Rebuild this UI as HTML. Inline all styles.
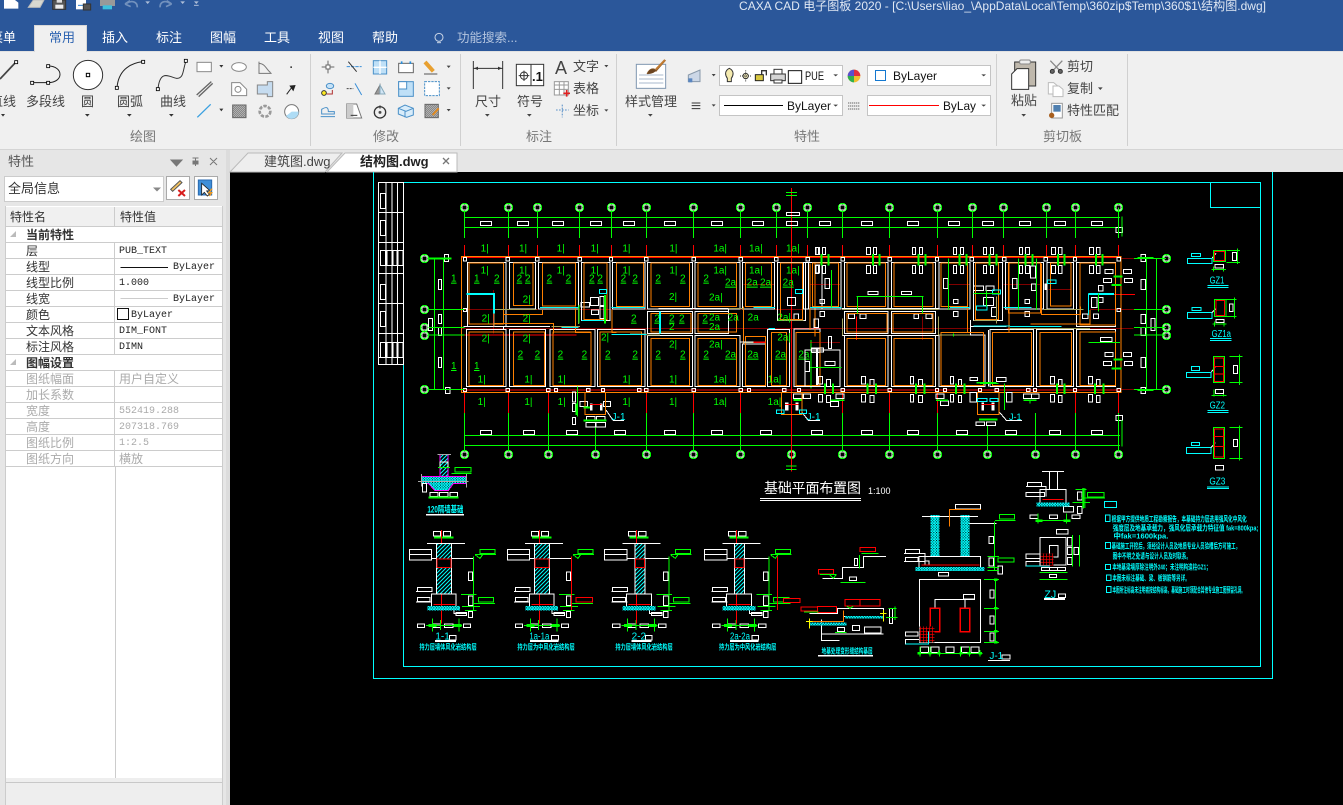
<!DOCTYPE html>
<html lang="zh"><head><meta charset="utf-8"><title>CAXA CAD</title>
<style>
html,body{margin:0;padding:0;width:1343px;height:805px;overflow:hidden;background:#000}
body{position:relative;font-family:"Liberation Sans","Noto Sans CJK SC",sans-serif}
.a{position:absolute}
.panel{left:0;top:150px;width:230px;height:655px;background:#e6e6e6}
.rw{position:absolute;left:6px;width:216px;height:16px;box-sizing:border-box;border-bottom:1px solid #ccc;font-size:12px;line-height:17px;color:#333;white-space:nowrap}
.rw i{position:absolute;left:108px;top:0;width:1px;height:16px;background:#ccc}
.rw b,.rw span{position:absolute;top:0}
.n{left:20px}.v{left:113px;font:10px/17px "Liberation Mono",monospace;color:#222}.g{color:#aaa}
.cj{font-family:"Liberation Sans","Noto Sans CJK SC",sans-serif;font-size:12px}
svg text{font-family:"Liberation Sans","Noto Sans CJK SC",sans-serif}
</style></head><body>
<div class="a" style="left:0;top:0;width:1343px;height:51px;background:#2b579a"></div>
<div class="a" style="left:0;top:51px;width:1343px;height:98px;background:#f0f0f0;border-top:1px solid #e2e2e2;box-sizing:border-box"></div>
<div class="a" style="left:0;top:149px;width:1343px;height:23px;background:#e6e6e6;border-top:1px solid #d4d4d4;box-sizing:border-box"></div>
<div class="a" style="left:34px;top:25px;width:53px;height:27px;background:#f0f0f0;border:1px solid #d8d8d8;border-bottom:0;box-sizing:border-box"></div>
<div class="a" style="left:230px;top:172px;width:1113px;height:633px;background:#000"></div>

<div class="a panel">
 <div class="a" style="left:4px;top:26px;width:160px;height:26px;background:#fff;border:1px solid #ccc;box-sizing:border-box;font-size:13px;line-height:23px;color:#333;padding-left:3px">全局信息</div>
 <div class="a" style="left:166px;top:26px;width:24px;height:24px;background:#fff;border:1px solid #aaa;box-sizing:border-box"></div>
 <div class="a" style="left:194px;top:26px;width:24px;height:24px;background:#fff;border:1px solid #aaa;box-sizing:border-box"></div>
 <div class="a" style="left:5px;top:56px;width:218px;height:599px;background:#fff;border:1px solid #ccc;border-width:0 1px;box-sizing:border-box"></div>
 <div class="a" style="left:115px;top:316px;width:1px;height:312px;background:#ccc"></div>
 <div class="a" style="left:6px;top:628px;width:216px;height:27px;background:#eee"></div>
 <div class="a" style="left:6px;top:632px;width:216px;height:1px;background:#c8c8c8"></div>
 <div class="a" style="left:226px;top:0;width:4px;height:655px;background:#dcdcdc"></div>
 <div class="rw" style="top:57px;height:20px;background:#f0f0f0;line-height:21px;border-bottom:1px solid #ccc"><span style="left:4px">特性名</span><i style="height:20px"></i><span style="left:114px">特性值</span></div>
 <div class="rw" style="top:77px"><b class="n" style="font-weight:700">当前特性</b></div>
 <div class="rw" style="top:93px"><span class="n">层</span><i></i><span class="v">PUB_TEXT</span></div>
 <div class="rw" style="top:109px"><span class="n">线型</span><i></i><span class="v" style="left:167px">ByLayer</span></div>
 <div class="rw" style="top:125px"><span class="n">线型比例</span><i></i><span class="v">1.000</span></div>
 <div class="rw" style="top:141px"><span class="n">线宽</span><i></i><span class="v" style="left:167px">ByLayer</span></div>
 <div class="rw" style="top:157px"><span class="n">颜色</span><i></i><span class="v" style="left:125px">ByLayer</span></div>
 <div class="rw" style="top:173px"><span class="n">文本风格</span><i></i><span class="v">DIM_FONT</span></div>
 <div class="rw" style="top:189px"><span class="n">标注风格</span><i></i><span class="v">DIMN</span></div>
 <div class="rw" style="top:205px"><b class="n" style="font-weight:700">图幅设置</b></div>
 <div class="rw" style="top:221px"><span class="n g">图纸幅面</span><i></i><span class="v cj g">用户自定义</span></div>
 <div class="rw" style="top:237px"><span class="n g">加长系数</span><i></i></div>
 <div class="rw" style="top:253px"><span class="n g">宽度</span><i></i><span class="v g">552419.288</span></div>
 <div class="rw" style="top:269px"><span class="n g">高度</span><i></i><span class="v g">207318.769</span></div>
 <div class="rw" style="top:285px"><span class="n g">图纸比例</span><i></i><span class="v g">1:2.5</span></div>
 <div class="rw" style="top:301px"><span class="n g">图纸方向</span><i></i><span class="v cj g">横放</span></div>
</div>

<svg class="a" style="left:0;top:0" width="1343" height="805" viewBox="0 0 1343 805" xmlns="http://www.w3.org/2000/svg">
<defs>
<pattern id="hz" width="12" height="12" patternUnits="userSpaceOnUse"><rect width="12" height="12" fill="#000"/><path d="M0 12L12 0M-3 3L3 -3M9 15L15 9" stroke="#0ff" stroke-width="3"/></pattern>
<pattern id="sp" width="8" height="8" patternUnits="userSpaceOnUse"><rect width="8" height="8" fill="#0ff"/><rect width="3" height="3" fill="#000"/><rect x="5" y="4" width="2" height="3" fill="#000"/></pattern>
<pattern id="rh" width="9" height="9" patternUnits="userSpaceOnUse"><rect width="9" height="9" fill="#000"/><path d="M0 0H9M0 0V9" stroke="#f00" stroke-width="4"/></pattern>
<pattern id="gh" width="6" height="6" patternUnits="userSpaceOnUse"><rect width="6" height="6" fill="#b8b8b8"/><path d="M0 6L6 0" stroke="#777" stroke-width="2"/></pattern>
<g id="c"><circle r="4" fill="#000" stroke="#0f0" stroke-width="1.3"/><rect x="-2.500" y="-2.500" width="5" height="5" fill="none" stroke="#fff"/></g>
<g id="sec">
 <g stroke="#fff" stroke-width="3" fill="none">
  <path d="M-32 244h22v14h-22zM-2 244h22v14h-22zM-51 280H63M-104 298h67v16h-67zM-104 314h67v16h-67zM-36 325H90M-38 432h74v38h-74zM-80 412h44v12h-44zM-84 424H-36M-80 442h38v12h-38zM-84 456H-36M73 366h13v26h-13zM73 438h14v28h-14zM73 484h13v18h-13zM30 470V490H68M36 487h32v10h-32zM-80 522h22v10h-22zM-35 522h25v10h-25zM2 522h25v10h-25zM58 522h22v10h-22z"/>
 </g>
 <path d="M-30 262H28" stroke="#0f0" stroke-width="6"/>
 <path d="M108 298h45v12h-45zM93 314H156M93 314L108 325L116 314M89 320V480M51 433H98M54 470H108M63 482H98M103 442h46v14h-46zM90 460H153M-54 526H54M-35 505V545M-10 510V540M45 505V545" stroke="#0f0" stroke-width="3" fill="none"/>
 <rect x="-46" y="522" width="24" height="9" fill="#0f0"/><rect x="28" y="522" width="24" height="9" fill="#0f0"/>
 <path d="M-8 240V520M-32 463H33" stroke="#f00" stroke-width="3"/>
 <rect x="-50" y="468" width="98" height="14" fill="url(#sp)"/>
</g>
</defs>

<!-- title bar text -->
<text x="739" y="10" font-size="12" fill="#dfe7f3" textLength="527" lengthAdjust="spacingAndGlyphs">CAXA CAD 电子图板 2020 - [C:\Users\liao_\AppData\Local\Temp\360zip$Temp\360$1\结构图.dwg]</text>
<g font-size="13" fill="#fff">
<text x="-10" y="42">菜单</text><text x="49" y="42" fill="#2b62b0">常用</text><text x="102" y="42">插入</text><text x="156" y="42">标注</text><text x="210" y="42">图幅</text><text x="264" y="42">工具</text><text x="318" y="42">视图</text><text x="372" y="42">帮助</text>
<text x="457" y="42" fill="#b4c5df" font-size="12.500">功能搜索...</text>
</g>
<!-- ribbon labels -->
<g font-size="13" fill="#444">
<text x="-10" y="106">直线</text><text x="26" y="106">多段线</text><text x="81" y="106">圆</text><text x="117" y="106">圆弧</text><text x="160" y="106">曲线</text>
<text x="475" y="106">尺寸</text><text x="517" y="106">符号</text><text x="573" y="71">文字</text><text x="573" y="93">表格</text><text x="573" y="115">坐标</text>
<text x="625" y="106">样式管理</text><text x="1011" y="105">粘贴</text><text x="1067" y="71">剪切</text><text x="1067" y="93">复制</text><text x="1067" y="115">特性匹配</text>
</g>
<g font-size="13" fill="#777">
<text x="130" y="141">绘图</text><text x="373" y="141">修改</text><text x="526" y="141">标注</text><text x="794" y="141">特性</text><text x="1043" y="141">剪切板</text>
</g>
<path d="M310.500 54V146M460.500 54V146M616.500 54V146M996.500 54V146M1127.500 54V146" stroke="#d0d0d0"/>

<!-- properties combos -->
<g fill="#fff" stroke="#c4c4c4">
<rect x="719.500" y="65.500" width="123" height="20"/><rect x="719.500" y="95.500" width="123" height="20"/><rect x="867.500" y="65.500" width="123" height="20"/><rect x="867.500" y="95.500" width="123" height="20"/>
</g>
<g font-size="12" fill="#111"><text x="805" y="80" textLength="19" lengthAdjust="spacingAndGlyphs">PUE</text><text x="787" y="110">ByLayer</text><text x="893" y="80">ByLayer</text><text x="943" y="110" textLength="33" lengthAdjust="spacingAndGlyphs">ByLay</text></g>
<path d="M724 105.500H783" stroke="#000"/><path d="M869 105.500H939" stroke="#f00"/>
<rect x="875.500" y="70.500" width="10" height="10" fill="#fff" stroke="#1478d0"/>

<!-- zoom-1 scale ribbon icons -->
<g transform="scale(.33333)" fill="none" stroke="#555" stroke-width="3">
 <g fill="#fff" stroke="none"><path d="M12 0H45L55 8V26H12z"/></g>
 <path d="M85 22L100 0H132L120 22z" fill="#d8d8d0" stroke="#bbb"/>
 <path d="M158 0H197V28H158z" fill="#555" stroke="#333"/><rect x="170" y="0" width="16" height="8" fill="#ddd" stroke="none"/><rect x="166" y="14" width="24" height="12" fill="#eee" stroke="none"/>
 <rect x="228" y="0" width="30" height="28" fill="#fff" stroke="none"/><path d="M234 16h16" stroke="#2b7fd0"/><rect x="250" y="12" width="22" height="18" fill="#555" stroke="#333"/>
 <rect x="300" y="0" width="45" height="18" fill="#999" stroke="none"/><rect x="308" y="16" width="28" height="12" fill="#3fc0dc" stroke="none"/>
 <path d="M380 10C395 0 412 5 412 22M375 12L390 2M375 12L392 20" stroke="#7291bd" stroke-width="5"/>
 <path d="M510 10C495 0 480 5 480 22M515 12L500 2M515 12L498 20" stroke="#7291bd" stroke-width="5"/>
 <path d="M436 4h14l-7 8zM541 4h14l-7 8zM582 4h14l-7 8z" fill="#aebed8" stroke="none"/><path d="M582 16h14" stroke="#aebed8"/>
 <!-- bulb -->
 <circle cx="1317" cy="112" r="12" stroke="#c8d4e6"/><path d="M1311 128h12" stroke="#c8d4e6"/>
 <!-- draw group -->
 <path d="M0 237L48 186" stroke="#444" stroke-width="5"/><rect x="44" y="182" width="9" height="9" fill="#fff" stroke="#000" stroke-width="2.500"/>
 <path d="M96 248H144M144 198C192 198 192 248 144 248" stroke="#222" stroke-width="3"/>
 <g fill="#fff" stroke="#000" stroke-width="2.500"><rect x="140" y="194" width="9" height="9"/><rect x="92" y="244" width="9" height="9"/><rect x="140" y="244" width="9" height="9"/></g>
 <circle cx="264" cy="225" r="44" fill="#fff" stroke="#333"/><rect x="259" y="220" width="10" height="10" stroke="#000"/>
 <path d="M351 263C355 215 385 190 429 185" stroke="#222"/><path d="M474 267C480 205 510 232 530 235C552 236 548 210 558 183" stroke="#333"/>
 <g fill="#fff" stroke="#000" stroke-width="2.500"><rect x="346" y="259" width="9" height="9"/><rect x="425" y="181" width="9" height="9"/><rect x="469" y="263" width="9" height="9"/><rect x="553" y="178" width="9" height="9"/></g>
 <path d="M3 342h12l-6 8zM255 342h14l-7 8zM381 342h14l-7 8zM507 342h14l-7 8zM658 195h12l-6 8zM658 326h12l-6 8z" fill="#333" stroke="none"/>
 <rect x="591" y="187" width="43" height="28" fill="#fff" stroke="#888"/>
 <path d="M590 285L634 245M596 290L638 250" stroke="#666" stroke-width="4"/>
 <path d="M592 352L632 313" stroke="#3aa0e0" stroke-width="4"/>
 <ellipse cx="717" cy="201" rx="22" ry="13" fill="#fff" stroke="#888"/>
 <path d="M695 248H720L740 268V287H695z" fill="#fff" stroke="#888"/><circle cx="714" cy="268" r="9" stroke="#888"/>
 <rect x="698" y="315" width="40" height="38" fill="url(#gh)" stroke="#666"/>
 <path d="M777 185V220H815M777 190C795 190 800 210 812 218" stroke="#777"/>
 <path d="M772 255h30v-10h16v45h-16v-8h-30z" fill="#c6dcf0" stroke="#888"/>
 <circle cx="795" cy="334" r="16" stroke="#9a9a9a" stroke-width="8" stroke-dasharray="10 4"/>
 <rect x="871" y="199" width="5" height="5" fill="#444" stroke="none"/>
 <path d="M860 283L874 264" stroke="#222"/><path d="M868 257L887 255L880 274z" fill="#222" stroke="none"/>
 <circle cx="875" cy="335" r="21" fill="#fff" stroke="#777"/><path d="M875 335H896A21 21 0 0 1 858 348z" fill="#aedcf5" stroke="none"/>
 <!-- modify group -->
 <path d="M965 201H1003M984 182V220" stroke="#666"/><rect x="978" y="195" width="12" height="12" fill="#fff" stroke="#666"/>
 <path d="M1040 200H1085" stroke="#3a8fd8" stroke-dasharray="10 3"/><path d="M1045 185L1070 215" stroke="#333"/>
 <rect x="1120" y="182" width="40" height="40" fill="#bfe0f7" stroke="#4a90c8"/><path d="M1140 182V222M1120 202H1160" stroke="#fff" stroke-width="4"/>
 <rect x="1196" y="190" width="44" height="28" fill="#fff" stroke="#666"/><path d="M1205 184v8M1231 184v8" stroke="#2b8fdc" stroke-width="5"/>
 <path d="M1275 186L1300 214" stroke="#e8a030" stroke-width="12"/><path d="M1272 222H1312" stroke="#555"/>
 <path d="M1340 197h12l-6 7zM1340 262h12l-6 7zM1340 327h12l-6 7z" fill="#444" stroke="none"/>
 <circle cx="972" cy="279" r="7" fill="#fdea20" stroke="#333"/><ellipse cx="990" cy="258" rx="11" ry="8" fill="#c5e2f7" stroke="#4a90c8"/><path d="M980 282H997V270" stroke="#b03030"/>
 <path d="M1040 266H1060" stroke="#444" stroke-dasharray="6 3"/><path d="M1065 250L1085 285" stroke="#3a8fd8"/>
 <path d="M1125 282L1140 255V282z" fill="#999" stroke="#777"/><path d="M1155 282L1140 255V282z" fill="#d2e6f6" stroke="#8ab"/>
 <rect x="1196" y="245" width="44" height="44" fill="#bfe0f7" stroke="#4a90c8"/><rect x="1196" y="245" width="24" height="22" fill="#fff" stroke="#4a90c8"/>
 <rect x="1274" y="245" width="44" height="42" fill="#fff" stroke="#4a90c8" stroke-dasharray="7 3"/>
 <path d="M962 350H1005M965 342V328C978 320 985 320 985 335H1003V342z" stroke="#4a90c8"/>
 <path d="M1040 312H1070L1085 354H1040z" fill="#fff" stroke="#777"/><path d="M1040 312h20v42h-20z" fill="#ccc" stroke="none"/><path d="M1052 346h20" stroke="#333"/>
 <circle cx="1140" cy="337" r="17" stroke="#333" stroke-width="4"/><circle cx="1140" cy="337" r="3" fill="#333"/><path d="M1140 316V326" stroke="#333"/>
 <path d="M1195 325L1215 315L1240 325V345L1220 352L1195 342z" fill="#d8ecfa" stroke="#4a90c8"/><path d="M1215 332V352M1195 325L1218 334L1240 325" stroke="#4a90c8"/>
 <rect x="1275" y="313" width="40" height="40" fill="url(#gh)" stroke="#666"/><path d="M1298 345L1316 325" stroke="#e08a20" stroke-width="6"/>
</g>
<!-- zoom-2 group -->
<g transform="translate(450,0) scale(.33333)" fill="none" stroke="#333" stroke-width="3">
 <path d="M70 183V267M158 183V267M70 205H158"/><path d="M72 205l12-5v10zM156 205l-12-5v10z" fill="#333" stroke="none"/>
 <rect x="199" y="193" width="82" height="64" fill="#fff"/><path d="M243 193V257M222 212V243M206 227H238"/><circle cx="222" cy="227" r="11"/>
 <path d="M105 342h14l-7 8zM231 342h14l-7 8zM463 195h12l-6 7zM463 328h12l-6 7zM594 342h14l-7 8zM785 222h12l-6 7zM785 313h12l-6 7zM1150 223h14l-7 6zM1150 314h14l-7 6z" fill="#444" stroke="none"/>
 <rect x="313" y="245" width="42" height="40" fill="#fff" stroke="#999"/><path d="M313 255H355M313 268H355M328 245V285M342 245V285" stroke="#999"/><path d="M340 280H360M350 270V290" stroke="#e02020" stroke-width="5"/>
 <path d="M318 330H356M337 314V352" stroke="#7aa5d0" stroke-dasharray="5 4" stroke-width="4"/>
 <rect x="559" y="193" width="88" height="72" fill="#fff" stroke="#7f96b0"/><path d="M567 225H640M567 237H640M567 249H640" stroke="#a8b8cc"/><path d="M592 222C600 205 612 205 618 212L646 180L632 196" stroke="#8a5a2a" stroke-width="5"/><path d="M592 222C598 206 610 204 618 212C612 220 602 222 592 222z" fill="#6b4420" stroke="none"/><path d="M618 208L645 180" stroke="#c07a30" stroke-width="6"/>
 <path d="M715 225L750 210V245H715z" fill="#ccd7e6" stroke="#8899aa"/><rect x="715" y="235" width="12" height="12" fill="#5a86c0" stroke="none"/>
 <path d="M725 309H751M725 317H751M725 326H751"/>
 <path d="M838 205c-16 8-12 22-6 30v10h12v-10c6-8 10-22-6-30z" fill="#f5ebb0"/>
 <circle cx="887" cy="228" r="8" fill="#fdf5c0"/><path d="M870 228H904M887 211V245" stroke-dasharray="3 3"/>
 <rect x="916" y="224" width="24" height="18" fill="#d9c840" stroke="#222"/><path d="M935 224V212h14v14" stroke-width="4"/>
 <rect x="962" y="222" width="44" height="20" fill="#d5d5d5"/><rect x="972" y="208" width="24" height="14" fill="#fff"/><rect x="972" y="240" width="24" height="9" fill="#fff"/>
 <rect x="1015" y="212" width="40" height="38" fill="#fff" stroke="#111"/>
 <circle cx="1212" cy="228" r="19" fill="#f0c030" stroke="none"/><path d="M1212 228V209A19 19 0 0 0 1193 228z" fill="#5a50d0" stroke="none"/><path d="M1212 228H1193A19 19 0 0 0 1212 247z" fill="#30b050" stroke="none"/><path d="M1212 228V209A19 19 0 0 1 1231 228z" fill="#e03040" stroke="none"/>
 <path d="M1194 309H1230M1194 318H1230M1194 327H1230" stroke="#666" stroke-dasharray="4 2"/>
</g>
<text x="532" y="81" font-size="13" font-weight="700" fill="#111">.1</text>
<text x="555" y="74" font-size="18" fill="#444">A</text>
<!-- zoom-3 group -->
<g transform="translate(893,0) scale(.33333)" fill="none" stroke="#333" stroke-width="3">
 <rect x="365" y="186" width="63" height="72" fill="#bfb8ac"/><rect x="380" y="180" width="32" height="12" rx="4" fill="#eee" stroke="#888"/>
 <path d="M356 222L372 206H407V268H356z" fill="#fff"/>
 <path d="M385 342h14l-7 8zM615 262h14l-7 8zM265 223h14l-7 6zM265 314h14l-7 6z" fill="#444" stroke="none"/>
 <path d="M472 182L508 220M508 182L472 220" stroke="#888" stroke-width="4"/><circle cx="478" cy="214" r="6" fill="#666"/><circle cx="502" cy="214" r="6" fill="#666"/>
 <path d="M466 248H482L494 258V282H466z" fill="#fff" stroke="#bbb"/><path d="M480 258H498L510 268V290H480z" fill="#fff" stroke="#bbb"/>
 <rect x="476" y="310" width="32" height="44" fill="#fff" stroke="#999"/><rect x="481" y="315" width="22" height="20" fill="#5080b0" stroke="none"/><circle cx="476" cy="346" r="8" fill="#a86020" stroke="none"/>
</g>
<!-- panel header -->
<text x="8" y="166" font-size="13" fill="#555">特性</text>
<path d="M171 160h11l-5.500 6zM192.500 158h6M195.500 158v8M193 161h5v3h-5zM210 158l7 7M217 158l-7 7" stroke="#777" fill="#777"/>
<path d="M150 187.500h8l-4 4z" fill="#888" transform="translate(3,0)"/>
<g transform="translate(160,170) scale(.33333)">
 <path d="M32 58L60 32L66 38L38 64z" fill="#f0c060" stroke="#555" stroke-width="3"/><path d="M55 60L75 78M75 60L55 78" stroke="#d81e1e" stroke-width="6"/>
 <rect x="115" y="30" width="40" height="45" fill="#3f8fd8" stroke="#2a6ab0" stroke-width="3"/><path d="M125 40V75L133 67L142 78L148 73L140 63L150 62z" fill="#fff" stroke="#222" stroke-width="2.500"/><path d="M156 56L146 68H155L148 78" stroke="#f09a20" stroke-width="4" fill="none"/>
</g>
<path d="M10 237h6v-6zM10 365h6v-6z" fill="#bbb"/>
<path d="M120.500 267.500H168" stroke="#111"/><path d="M120.500 298.500H168" stroke="#ccc"/>
<rect x="117.500" y="308.500" width="11" height="11" fill="#fff" stroke="#111"/>
<!-- tabs -->
<path d="M230 172L248 153H342L325 172z" fill="#eeeeee" stroke="#bbb"/>
<path d="M327 172L345 153H457V172z" fill="#fff" stroke="#bbb"/>
<text x="264" y="166" font-size="13" fill="#444">建筑图.dwg</text>
<text x="360" y="166" font-size="13" font-weight="700" fill="#222">结构图.dwg</text>
<path d="M443 158l6 6M449 158l-6 6" stroke="#777" stroke-width="1.300"/>

<!-- =============== CAD DRAWING =============== -->
<g shape-rendering="crispEdges">
 <g fill="none" stroke="#0ff">
  <path d="M373.500 172V678.500H1272.500V172M403.500 182.500H1260.500V666.500H403.500z"/><path d="M1210.500 182V207.500H1260"/>
 </g>
 <!-- side title block -->
 <g fill="none" stroke="#fff"><path d="M378.500 182.500H403.500V364.500H378.500zM386 182V364M392 182V364M397.500 182V364M378 212.500H403M378 242.500H403M378 273.500H403M378 303.500H403M378 333.500H403M378 357.500H403"/>
 <path d="M380.500 193.500h5v15h-5zM380.500 220.500h5v15h-5zM380.500 250.500h5v15h-5zM387 250.500h5v15h-5zM393 250.500h4v15h-4zM398 250.500h5v15h-5zM380.500 284.500h5v15h-5zM380.500 311.500h5v15h-5zM380.500 342.500h5v15h-5zM387 342.500h5v15h-5zM393 342.500h4v15h-4zM398 342.500h5v15h-5z"/></g>
 <!-- dimension lines & axes -->
 <path d="M465 217.500H1120M465 227.500H1120M465 435.500H1120M465 445.500H1120" stroke="#0f0"/>
 <path d="M464.500 207V238M508.500 207V238M537.500 207V238M579.500 207V238M611.500 207V238M646.500 207V238M693.500 207V238M740.500 207V238M776.500 207V238M807.500 207V238M842.500 207V238M889.500 207V238M937.500 207V238M972.500 207V238M1003.500 207V238M1046.500 207V238M1075.500 207V238M1118.500 207V238" stroke="#0f0"/>
 <path d="M464.500 245V256M508.500 245V256M537.500 245V256M579.500 245V256M611.500 245V256M646.500 245V256M693.500 245V256M740.500 245V256M776.500 245V256M807.500 245V256M842.500 245V256M889.500 245V256M937.500 245V256M972.500 245V256M1003.500 245V256M1046.500 245V256M1075.500 245V256M1118.500 245V256M464.500 393V413M508.500 393V413M548.500 393V413M646.500 393V413M693.500 393V413M740.500 393V413M842.500 393V413M889.500 393V413M937.500 393V413M1075.500 393V413M1118.500 393V413M791.500 188V460" stroke="#f00"/>
 <path d="M464.500 413V454M508.500 413V454M548.500 413V454M595.500 425V454M646.500 413V454M693.500 413V454M740.500 413V454M842.500 413V454M889.500 413V454M937.500 413V454M987.500 425V454M1035.500 413V454M1075.500 413V454M1118.500 413V454" stroke="#0f0"/>
 <path d="M480.500 221.500h11v4h-11zM517.500 221.500h11v4h-11zM552.500 221.500h11v4h-11zM590.500 221.500h11v4h-11zM623.500 221.500h11v4h-11zM664.500 221.500h11v4h-11zM711.500 221.500h11v4h-11zM752.500 221.500h11v4h-11zM786.500 221.500h11v4h-11zM786.500 212.500h13v3h-13zM819.500 221.500h11v4h-11zM861.500 221.500h11v4h-11zM907.500 221.500h11v4h-11zM948.500 221.500h11v4h-11zM982.500 221.500h11v4h-11zM1019.500 221.500h11v4h-11zM1054.500 221.500h11v4h-11zM1091.500 221.500h11v4h-11zM480.500 430.500h11v4h-11zM523.500 430.500h11v4h-11zM566.500 430.500h11v4h-11zM614.500 430.500h11v4h-11zM664.500 430.500h11v4h-11zM711.500 430.500h11v4h-11zM760.500 430.500h11v4h-11zM811.500 430.500h11v4h-11zM861.500 430.500h11v4h-11zM907.500 430.500h11v4h-11zM956.500 430.500h11v4h-11zM1005.500 430.500h11v4h-11zM1049.500 430.500h11v4h-11zM1091.500 430.500h11v4h-11z" fill="none" stroke="#fff"/>
 <path d="M786 192.500H797M786 195.500H797" stroke="#0f0"/>
 <!-- axis circles -->
 <use href="#c" x="464.500" y="207.500"/><use href="#c" x="508.500" y="207.500"/><use href="#c" x="537.500" y="207.500"/><use href="#c" x="579.500" y="207.500"/><use href="#c" x="611.500" y="207.500"/><use href="#c" x="646.500" y="207.500"/><use href="#c" x="693.500" y="207.500"/><use href="#c" x="740.500" y="207.500"/><use href="#c" x="776.500" y="207.500"/><use href="#c" x="807.500" y="207.500"/><use href="#c" x="842.500" y="207.500"/><use href="#c" x="889.500" y="207.500"/><use href="#c" x="937.500" y="207.500"/><use href="#c" x="972.500" y="207.500"/><use href="#c" x="1003.500" y="207.500"/><use href="#c" x="1046.500" y="207.500"/><use href="#c" x="1075.500" y="207.500"/><use href="#c" x="1118.500" y="207.500"/>
 <use href="#c" x="464.500" y="454.500"/><use href="#c" x="508.500" y="454.500"/><use href="#c" x="548.500" y="454.500"/><use href="#c" x="595.500" y="454.500"/><use href="#c" x="646.500" y="454.500"/><use href="#c" x="693.500" y="454.500"/><use href="#c" x="740.500" y="454.500"/><use href="#c" x="791.500" y="454.500"/><use href="#c" x="842.500" y="454.500"/><use href="#c" x="889.500" y="454.500"/><use href="#c" x="937.500" y="454.500"/><use href="#c" x="987.500" y="454.500"/><use href="#c" x="1035.500" y="454.500"/><use href="#c" x="1075.500" y="454.500"/><use href="#c" x="1118.500" y="454.500"/>
 <use href="#c" x="424.500" y="258.500"/><use href="#c" x="424.500" y="309.500"/><use href="#c" x="424.500" y="327.500"/><use href="#c" x="424.500" y="335.500"/><use href="#c" x="424.500" y="389.500"/>
 <use href="#c" x="1166.500" y="258.500"/><use href="#c" x="1166.500" y="309.500"/><use href="#c" x="1166.500" y="327.500"/><use href="#c" x="1166.500" y="335.500"/><use href="#c" x="1166.500" y="389.500"/>

 <!-- left plan in zoom coordinates -->
 <g transform="translate(370,170) scale(.33333)" fill="none" stroke-width="3">
  <path d="M275 418H1350M275 475H1350M275 495H620M275 263H1350M275 660H1350M370 360V490M535 670V730M1120 343H1215M1192 475V650" stroke="#f00" stroke-width="2.500"/>
  <path d="M1350 260H275V667H1350" stroke="#ff8000"/>
  <g stroke="#fff">
   <rect x="292" y="277" width="116" height="193"/><rect x="418" y="277" width="79" height="140"/><rect x="506" y="277" width="119" height="140"/><rect x="635" y="277" width="85" height="175"/><rect x="728" y="277" width="97" height="140"/><rect x="833" y="277" width="135" height="140"/><rect x="975" y="277" width="135" height="140"/><rect x="1118" y="277" width="95" height="140"/><rect x="1222" y="277" width="85" height="175"/><rect x="1316" y="277" width="40" height="140"/>
   <rect x="290" y="479" width="118" height="170"/><rect x="418" y="479" width="109" height="170"/><rect x="540" y="479" width="135" height="170"/><rect x="683" y="479" width="142" height="170"/><rect x="833" y="497" width="135" height="152"/><rect x="975" y="497" width="135" height="152"/><rect x="1118" y="522" width="68" height="127"/><rect x="1192" y="479" width="66" height="170"/><rect x="1272" y="477" width="78" height="172"/>
   <rect x="833" y="425" width="135" height="65"/><rect x="975" y="425" width="100" height="65"/>
   <path d="M865 416H1075V425M280 470H540M400 470V479"/>
   <path d="M280 263h10v10h-10zM408 263h10v10h-10zM497 263h10v10h-10zM624 263h10v10h-10zM718 263h10v10h-10zM824 263h10v10h-10zM966 263h10v10h-10zM1107 263h10v10h-10zM1214 263h10v10h-10zM1308 263h10v10h-10zM280 655h10v10h-10zM408 655h10v10h-10zM530 655h10v10h-10zM553 655h10v10h-10zM650 655h10v10h-10zM694 655h10v10h-10zM803 655h10v10h-10zM824 655h10v10h-10zM966 655h10v10h-10zM1107 655h10v10h-10zM1132 655h10v10h-10zM1238 655h10v10h-10zM1282 655h10v10h-10zM280 415h10v10h-10z"/>
   <path d="M223 253h13v22h-13zM205 328h10v30h-10zM205 433h10v28h-10zM205 473h10v24h-10zM175 445h12v36h-12zM205 562h10v30h-10zM227 652h13v18h-13z"/>
   <rect x="662" y="382" width="24" height="24"/><rect x="633" y="397" width="26" height="14"/><rect x="690" y="380" width="12" height="26"/><rect x="690" y="410" width="12" height="36"/><rect x="664" y="420" width="22" height="14"/><rect x="1252" y="382" width="24" height="24"/><rect x="1272" y="432" width="14" height="16"/><rect x="1338" y="232" width="10" height="22"/><rect x="1338" y="285" width="10" height="24"/><rect x="1305" y="575" width="14" height="30"/><rect x="1325" y="535" width="25" height="12"/>
   <rect x="607" y="666" width="10" height="30"/><rect x="607" y="700" width="10" height="24"/><rect x="607" y="742" width="10" height="22"/><rect x="630" y="695" width="22" height="14"/><rect x="700" y="695" width="22" height="14"/><rect x="650" y="740" width="25" height="10"/><rect x="680" y="740" width="25" height="10"/><rect x="648" y="757" width="28" height="14"/><rect x="678" y="757" width="28" height="14"/><rect x="1270" y="672" width="28" height="14"/><rect x="1300" y="672" width="22" height="14"/>
   <path d="M708 720L730 752H762M1295 725L1315 752H1350"/>
  </g>
  <path d="M660 700h8v22h-8zM690 700h8v22h-8zM1245 698h10v24h-10zM1276 698h10v24h-10z" fill="#fff" stroke="none"/>
  <path d="M660 704H695M1245 704H1285" stroke="#f00"/>
  <g stroke="#ff8000">
   <rect x="297" y="279" width="104" height="183"/><rect x="430" y="279" width="59" height="128"/><rect x="517" y="279" width="100" height="129"/><rect x="642" y="279" width="69" height="170"/><rect x="740" y="279" width="80" height="130"/><rect x="843" y="279" width="115" height="131"/><rect x="984" y="279" width="116" height="131"/><rect x="1126" y="279" width="79" height="131"/><rect x="1231" y="279" width="67" height="170"/>
   <rect x="297" y="486" width="104" height="161"/><rect x="430" y="486" width="93" height="161"/><rect x="549" y="486" width="114" height="161"/><rect x="690" y="486" width="125" height="161"/><rect x="843" y="505" width="115" height="142"/><rect x="984" y="505" width="116" height="142"/><rect x="1126" y="500" width="60" height="147"/><rect x="1204" y="488" width="46" height="159"/><rect x="1278" y="488" width="72" height="159"/>
   <rect x="843" y="430" width="120" height="56"/><rect x="984" y="430" width="116" height="56"/>
   <path d="M400 418V433H518V420M372 461H551V490M617 412V487H662M726 420V488H740M1120 410V520M1335 280V500"/>
   <rect x="645" y="668" width="62" height="66"/><rect x="1234" y="668" width="62" height="66"/>
  </g>
  <g stroke="#a8a860"><path d="M372 420V470M372 418H500M545 470H630M635 452H700M625 410V462M1120 518H1150M1075 416H1120M830 495H870M1222 452H1300M780 492H830"/></g>
  <path d="M290 372H372V430" stroke="#0ff" stroke-width="5"/>
  <g stroke="#0ff"><path d="M510 412H625M725 412H825M635 452H700M725 493H830M1150 412H1215M1195 476H1215M575 472H625M1320 412H1350"/><rect x="688" y="358" width="22" height="13"/><rect x="1276" y="358" width="22" height="13"/><rect x="1220" y="720" width="22" height="10"/><rect x="1288" y="720" width="22" height="10"/></g>
  <path d="M870 425V490" stroke="#0ff" stroke-width="5"/>
  <path d="M1186 516H1110" stroke="#fff" stroke-width="4"/><path d="M1150 517H1186" stroke="#f00" stroke-width="4"/>
  <g stroke="#0f0">
   <path d="M193 265V658M220 265V658M175 418H283M175 473H283M175 495H283M175 658H283M627 405V460M1323 510V655M622 650V740M284 140V200"/>
   <path d="M175 265H245" stroke-width="6"/><path d="M705 375V460" stroke-width="6"/>
   <path d="M640 712H660M640 752H710M1270 690H1295M620 700V735" stroke-width="6"/>
  </g>
  <!-- labels -->
  <g fill="#0f0" stroke="none" font-size="30" shape-rendering="auto">
   <text x="332" y="245">1|</text><text x="447" y="245">1|</text><text x="560" y="245">1|</text><text x="662" y="245">1|</text><text x="757" y="245">1|</text><text x="898" y="245">1|</text><text x="1030" y="245">1a|</text><text x="1137" y="245">1a|</text><text x="1248" y="245">1a|</text>
   <text x="332" y="310">1|</text><text x="447" y="310">1|</text><text x="560" y="310">1|</text><text x="662" y="310">1|</text><text x="757" y="310">1|</text><text x="898" y="310">1|</text><text x="1030" y="310">1a|</text><text x="1137" y="310">1a|</text><text x="1248" y="310">1a|</text>
   <text x="335" y="455">2|</text><text x="458" y="397">2|</text><text x="458" y="455">2|</text><text x="897" y="390">2|</text><text x="1017" y="392">2a|</text>
   <text x="335" y="515">2|</text><text x="458" y="515">2|</text><text x="897" y="532">2|</text><text x="1017" y="532">2a|</text><text x="693" y="512">2|</text><text x="1222" y="512">2a|</text>
   <text x="323" y="637">1|</text><text x="463" y="637">1|</text><text x="563" y="637">1|</text><text x="757" y="637">1|</text><text x="897" y="637">1|</text><text x="1030" y="637">1a|</text><text x="1193" y="637">1a|</text>
   <text x="323" y="705">1|</text><text x="463" y="705">1|</text><text x="563" y="705">1|</text><text x="757" y="705">1|</text><text x="897" y="705">1|</text><text x="1030" y="705">1a|</text><text x="1193" y="705">1a|</text>
   <text x="1017" y="452">2a</text><text x="1017" y="480">2a</text><text x="1073" y="452">2a</text><text x="1222" y="452">2a|</text><text x="1133" y="452">2a</text><text x="897" y="480">2</text>
   <text x="725" y="750" fill="#0ff">J-1</text><text x="1310" y="750" fill="#0ff">J-1</text>
   <g text-decoration="underline">
    <text x="243" y="335">1</text><text x="243" y="597">1</text><text x="312" y="335">1</text><text x="372" y="335">2</text><text x="440" y="335">2</text><text x="465" y="335">2</text><text x="530" y="335">2</text><text x="587" y="335">2</text><text x="657" y="335">2</text><text x="682" y="335">2</text><text x="752" y="335">2</text><text x="787" y="335">2</text><text x="856" y="335">2</text><text x="930" y="335">2</text><text x="1000" y="335">2</text><text x="1065" y="347">2a</text><text x="1130" y="347">2a</text><text x="1170" y="347">2a</text><text x="1238" y="347">2a</text>
    <text x="443" y="563">2</text><text x="494" y="563">2</text><text x="563" y="563">2</text><text x="635" y="563">2</text><text x="705" y="563">2</text><text x="787" y="563">2</text><text x="856" y="563">2</text><text x="930" y="563">2</text><text x="1000" y="563">2</text><text x="1065" y="563">2a</text><text x="1132" y="563">2a</text><text x="1215" y="563">2a</text><text x="1285" y="563">2a</text><text x="312" y="597">1</text>
    <text x="853" y="455">2</text><text x="897" y="455">2</text><text x="927" y="455">2</text><text x="997" y="455">2</text><text x="783" y="455">2</text>
   </g>
  </g>
 </g>

 <!-- right plan in zoom coordinates -->
 <g transform="translate(810,170) scale(.33333)" fill="none" stroke-width="3">
  <path d="M0 263H933M0 660H933M0 343H90M415 343H480M580 343H690M715 358H785M0 475H480M0 418H95M590 475H970M935 265H972M935 658H972M0 517H90M380 418H480M590 418H700M840 418H972M140 440V510M337 440V510" stroke="#f00" stroke-width="2.500"/>
  <path d="M840 373H975" stroke="#f00" stroke-width="3"/>
  <path d="M0 260H933V667H0" stroke="#ff8000"/>
  <g stroke="#fff">
   <rect x="-20" y="277" width="113" height="140"/><rect x="103" y="277" width="131" height="140"/><rect x="244" y="277" width="133" height="140"/><rect x="387" y="277" width="93" height="140"/><rect x="490" y="277" width="88" height="175"/><rect x="587" y="277" width="113" height="140"/><rect x="711" y="277" width="79" height="140"/><rect x="800" y="277" width="116" height="193"/>
   <rect x="103" y="497" width="131" height="152"/><rect x="244" y="497" width="133" height="152"/><rect x="387" y="495" width="138" height="155"/><rect x="540" y="479" width="130" height="170"/><rect x="680" y="479" width="110" height="170"/><rect x="800" y="479" width="116" height="170"/><rect x="-15" y="540" width="105" height="110"/>
   <rect x="103" y="425" width="131" height="65"/><rect x="244" y="425" width="133" height="65"/>
   <path d="M96 415H385M96 497H385M482 450V495M482 470H590M535 480V650"/>
   <path d="M93 263h10v10h-10zM234 263h10v10h-10zM376 263h10v10h-10zM480 263h10v10h-10zM578 263h10v10h-10zM702 263h10v10h-10zM790 263h10v10h-10zM921 263h10v10h-10zM93 655h10v10h-10zM234 655h10v10h-10zM376 655h10v10h-10zM400 655h10v10h-10zM505 655h10v10h-10zM555 655h10v10h-10zM650 655h10v10h-10zM670 655h10v10h-10zM790 655h10v10h-10zM921 655h10v10h-10zM921 415h10v10h-10z"/>
   <path d="M16 232h10v22h-10zM37 232h10v22h-10zM170 232h12v22h-12zM190 232h10v22h-10zM307 232h10v22h-10zM328 232h10v22h-10zM430 232h10v22h-10zM451 232h10v22h-10zM520 232h10v22h-10zM541 232h10v22h-10zM628 232h10v22h-10zM647 232h12v22h-12zM725 232h12v22h-12zM746 232h10v22h-10zM838 232h12v22h-12zM860 232h10v22h-10zM16 286h10v24h-10zM37 286h10v24h-10zM170 286h12v24h-12zM190 286h10v24h-10zM307 286h10v24h-10zM328 286h10v24h-10zM430 286h10v24h-10zM451 286h10v24h-10zM520 286h10v24h-10zM541 286h10v24h-10zM628 286h10v24h-10zM647 286h12v24h-12zM725 286h12v24h-12zM746 286h10v24h-10zM838 286h12v24h-12zM860 286h10v24h-10z"/>
   <path d="M154 620h12v22h-12zM180 628h12v22h-12zM301 620h10v22h-10zM326 628h12v22h-12zM421 620h10v22h-10zM445 628h10v22h-10zM835 620h12v22h-12zM860 628h10v22h-10zM722 620h12v22h-12zM746 628h10v22h-10zM25 620h12v22h-12zM50 628h12v22h-12zM154 674h12v22h-12zM180 676h12v22h-12zM301 674h10v22h-10zM326 676h12v22h-12zM421 674h10v22h-10zM445 676h10v22h-10zM835 674h12v22h-12zM860 676h10v22h-10zM722 674h12v22h-12zM746 676h10v22h-10zM25 674h12v22h-12zM50 676h12v22h-12z"/>
   <path d="M45 325h14v30h-14zM400 325h14v30h-14zM607 325h14v30h-14zM662 288h14v36h-14zM664 342h14v20h-14zM845 382h16v30h-16zM865 347h14v16h-14zM865 382h14v16h-14zM885 298h24v12h-24zM940 298h24v12h-24zM880 325h24v12h-24zM943 325h24v12h-24zM545 412h14v28h-14zM520 382h30v24h-30zM490 348h30v14h-30zM528 348h24v14h-24zM30 388h14v12h-14zM30 425h14v14h-14zM430 388h14v12h-14zM430 425h14v14h-14zM645 388h14v12h-14zM645 425h14v14h-14zM115 432h18v14h-18zM150 432h18v14h-18zM312 432h14v14h-14zM348 432h18v14h-18zM818 432h16v14h-16zM850 432h16v14h-16zM12 447h14v26h-14zM55 500h10v36h-10zM5 534h36v12h-36zM45 574h30v12h-30zM174 364h30v10h-30zM274 364h30v10h-30zM885 547h24v12h-24zM940 547h24v12h-24zM880 574h24v12h-24zM943 574h24v12h-24zM872 503h34v12h-34zM480 622h22v10h-22zM560 622h28v12h-28zM498 756h26v11h-26zM530 756h26v11h-26zM640 672h24v14h-24zM665 672h22v14h-22zM78 672h24v14h-24zM62 695h24v14h-24zM378 672h24v14h-24zM392 693h24v14h-24zM590 668h16v28h-16zM480 668h20v28h-20zM918 172h20v16h-20zM918 736h20v16h-20z"/>
   <path d="M993 253h14v22h-14zM993 328h14v30h-14zM993 433h14v28h-14zM993 473h14v24h-14zM1023 445h12v36h-12zM993 562h14v30h-14zM993 652h14v18h-14zM567 725L590 752H636"/>
  </g>
  <path d="M703 340h10v20h-10zM18 535h6v110h-6zM514 697h8v24h-8zM545 697h8v24h-8z" fill="#fff" stroke="none"/>
  <path d="M514 704H553" stroke="#f00"/>
  <g stroke="#ff8000">
   <rect x="111" y="279" width="116" height="131"/><rect x="252" y="279" width="117" height="131"/><rect x="393" y="279" width="79" height="131"/><rect x="497" y="279" width="69" height="170"/><rect x="595" y="279" width="96" height="150"/><rect x="721" y="279" width="62" height="129"/><rect x="810" y="279" width="106" height="186"/><rect x="7" y="279" width="78" height="131"/>
   <rect x="111" y="505" width="116" height="142"/><rect x="252" y="505" width="117" height="142"/><rect x="393" y="488" width="127" height="159"/><rect x="547" y="488" width="117" height="159"/><rect x="690" y="488" width="94" height="159"/><rect x="810" y="486" width="106" height="161"/>
   <rect x="111" y="430" width="120" height="56"/><rect x="249" y="430" width="120" height="56"/>
   <path d="M473 280V488H522M597 280V488H547M662 462H840V420M695 280V433H812V410M503 668V734H567V668M0 280V480"/>
  </g>
  <g stroke="#a8a860"><path d="M97 445V497M385 440V495M385 495H480M96 418H385M490 452H560M560 380V460M600 475H840M700 418H820"/></g>
  <g stroke="#0ff"><path d="M0 412H95M420 412H480M580 412H665M490 468H600M600 470H755M835 370V435"/><rect x="499" y="408" width="32" height="12"/><rect x="548" y="360" width="24" height="12"/><rect x="712" y="330" width="26" height="10"/><rect x="503" y="685" width="28" height="10"/><rect x="540" y="685" width="24" height="10"/></g>
  <path d="M835 372H912" stroke="#0ff" stroke-width="5"/>
  <g stroke="#0f0">
   <path d="M140 380H340M142 380V430M337 380V430M415 265V420M625 265V420M680 265V420M865 370V425M835 517H930M0 592H95M65 300V412M972 265H1068M972 418H1068M972 473H1068M972 495H1068M972 658H1068M1010 265V658M1040 265V658M926 112V200M936 140V200M926 750V830M936 750V830M583 640V720M490 370H570M530 362V410M430 490V500M510 640H565M660 690V700"/>
   <path d="M982 264H1030M982 660H1030" stroke-width="5"/>
   <path d="M31 252h6v34h-6zM52 252h6v34h-6zM186 252h6v34h-6zM205 252h6v34h-6zM322 252h6v34h-6zM343 252h6v34h-6zM445 252h6v34h-6zM466 252h6v34h-6zM535 252h6v34h-6zM556 252h6v34h-6zM643 252h6v34h-6zM664 252h6v34h-6zM741 252h6v34h-6zM760 252h6v34h-6zM855 252h6v34h-6zM875 252h6v34h-6zM42 640h6v32h-6zM66 640h6v32h-6zM170 640h6v32h-6zM195 640h6v32h-6zM315 640h6v32h-6zM340 640h6v32h-6zM435 640h6v32h-6zM460 640h6v32h-6zM738 640h6v32h-6zM760 640h6v32h-6zM852 640h6v32h-6zM877 640h6v32h-6zM910 316h28v6h-28zM905 342h30v6h-30zM910 565h28v6h-28zM905 592h30v6h-30zM507 746h55v6h-55zM378 688h36v5h-36zM62 688h42v5h-42zM640 688h40v5h-40zM500 636h60v5h-60z" fill="#0f0" stroke="none"/>
  </g>
  <!-- GZ details -->
  <g stroke="#0ff">
   <rect x="1132" y="265" width="74" height="16"/><rect x="1145" y="250" width="27" height="10"/>
   <rect x="1132" y="428" width="74" height="17"/><rect x="1146" y="412" width="27" height="10"/>
   <rect x="1129" y="607" width="74" height="16"/><rect x="1144" y="590" width="25" height="12"/>
   <rect x="1129" y="833" width="74" height="18"/><rect x="1144" y="817" width="25" height="10"/>
   <path d="M1192 347H1256M1192 352H1256M1200 506H1265M1200 511H1265M1192 722H1256M1192 727H1256"/>
   <path d="M1206 265L1218 250M1206 428L1218 415M1203 607L1216 592M1203 833L1216 818" stroke="#fff"/>
  </g>
  <g stroke="#0f0">
   <rect x="1210" y="241" width="37" height="34"/><rect x="1214" y="388" width="34" height="52"/><rect x="1210" y="560" width="34" height="78"/><rect x="1210" y="773" width="34" height="92"/>
   <path d="M1250 241H1290M1250 277H1290M1283 235V282M1205 298H1248M1210 290V305M1240 290V305M1248 388H1280M1248 440H1280M1274 382V445M1207 462H1250M1214 455V470M1242 455V470M1258 560H1298M1258 638H1298M1288 553V645M1204 676H1250M1212 658V680M1240 658V680M1258 773H1298M1258 866H1298M1288 767V872"/>
  </g>
  <g stroke="#f00"><rect x="1213" y="245" width="30" height="26"/><rect x="1218" y="392" width="26" height="44"/><rect x="1213" y="564" width="28" height="70"/><rect x="1213" y="777" width="28" height="84"/><path d="M1210 590H1244M1210 612H1244M1210 800H1244M1210 830H1244"/></g>
  <g stroke="#fff"><rect x="1268" y="247" width="11" height="24"/><rect x="1215" y="284" width="26" height="10"/><rect x="1258" y="402" width="11" height="22"/><rect x="1218" y="448" width="24" height="10"/><rect x="1270" y="586" width="13" height="24"/><rect x="1216" y="658" width="24" height="12"/><rect x="1270" y="808" width="13" height="22"/><rect x="1216" y="886" width="24" height="14"/></g>
  <g fill="#0ff" stroke="none" font-size="30" shape-rendering="auto"><text x="1199" y="341" textLength="44" lengthAdjust="spacingAndGlyphs">GZ1</text><text x="1205" y="501" textLength="58" lengthAdjust="spacingAndGlyphs">GZ1a</text><text x="1199" y="716" textLength="46" lengthAdjust="spacingAndGlyphs">GZ2</text><text x="597" y="750" font-size="27">J-1</text></g>
 </g>

 <!-- lower-left details -->
 <g transform="translate(400,450) scale(.33333)" fill="none" stroke-width="3">
  <path d="M1175 0V65" stroke="#f00"/><path d="M1158 48H1190M1158 58H1190" stroke="#0f0"/>
  <path d="M120 14h24v65h-24z" fill="url(#hz)" stroke="#f0f"/>
  <path d="M64 80H200V100H160L145 122H105L85 100H64z" fill="url(#sp)" stroke="#f0f"/>
  <path d="M112 14H153M54 95H205M64 72V110M200 72V112" stroke="#aaa"/>
  <g stroke="#fff"><rect x="120" y="36" width="24" height="16"/><rect x="67" y="100" width="13" height="26"/><rect x="90" y="128" width="24" height="12"/><rect x="118" y="128" width="26" height="12"/><rect x="150" y="128" width="22" height="12"/></g>
  <g stroke="#0f0"><path d="M114 52H150M155 70H215"/><rect x="165" y="52" width="48" height="14"/><path d="M85 143H176" stroke-width="6"/></g>
  <path d="M78 194H192" stroke="#fff" stroke-width="5"/>
  <g fill="#0ff" stroke="none" shape-rendering="auto"><text x="82" y="188" font-size="27" font-weight="700" textLength="108" lengthAdjust="spacingAndGlyphs">120隔墙基础</text></g>
  <!-- four sections -->
  <use href="#sec" x="132"/><use href="#sec" x="426"/><use href="#sec" x="718"/><use href="#sec" x="1018"/>
  <rect x="109" y="280" width="46" height="152" fill="url(#hz)" stroke="#fff"/><rect x="403" y="280" width="46" height="152" fill="url(#hz)" stroke="#fff"/><rect x="705" y="280" width="30" height="152" fill="url(#hz)" stroke="#fff"/><rect x="1003" y="280" width="30" height="152" fill="url(#hz)" stroke="#fff"/>
  <g fill="#000" stroke="#f00"><rect x="111" y="327" width="42" height="25"/><rect x="405" y="327" width="42" height="25"/><rect x="706" y="327" width="27" height="25"/><rect x="1005" y="327" width="27" height="25"/></g>
  <path d="M515 320V480M1132 320V480" stroke="#f00"/>
  <g stroke="#f00"><rect x="528" y="442" width="50" height="14" fill="#000"/><rect x="1150" y="445" width="50" height="12" fill="#000"/></g>
  <path d="M105 573H168M390 573H476M695 573H755M990 573H1075" stroke="#fff" stroke-width="5"/>
  <g stroke="#fff"><rect x="148" y="556" width="20" height="14"/><rect x="454" y="556" width="22" height="14"/><rect x="736" y="556" width="20" height="14"/><rect x="1056" y="556" width="20" height="14"/></g>
  <g fill="#0ff" stroke="none" font-size="30" shape-rendering="auto"><text x="106" y="568">1-1</text><text x="388" y="568" textLength="60" lengthAdjust="spacingAndGlyphs">1a-1a</text><text x="695" y="568">2-2</text><text x="990" y="568" textLength="60" lengthAdjust="spacingAndGlyphs">2a-2a</text></g>
  <g fill="#0ff" stroke="none" font-size="22" font-weight="700" shape-rendering="auto">
   <text x="58" y="599" textLength="172" lengthAdjust="spacingAndGlyphs">持力层墙体风化岩结构层</text>
   <text x="352" y="599" textLength="172" lengthAdjust="spacingAndGlyphs">持力层为中风化岩结构层</text>
   <text x="646" y="599" textLength="172" lengthAdjust="spacingAndGlyphs">持力层墙体风化岩结构层</text>
   <text x="957" y="599" textLength="172" lengthAdjust="spacingAndGlyphs">持力层为中风化岩结构层</text>
  </g>
 </g>
 <path d="M760 498.500H861M760 500.500H861" stroke="#fff"/>
 <text x="764" y="493" font-size="14" fill="#fff" textLength="97" lengthAdjust="spacing" shape-rendering="auto" font-family="Liberation Sans,Noto Serif CJK SC,serif">基础平面布置图</text>
 <text x="868" y="494" font-size="9" fill="#fff" shape-rendering="auto">1:100</text>

 <!-- lower-right details -->
 <g transform="translate(800,460) scale(.33333)" fill="none" stroke-width="3">
  <g stroke="#f00"><rect x="180" y="262" width="47" height="13"/><rect x="55" y="328" width="46" height="14"/><rect x="135" y="418" width="105" height="20"/><path d="M180 418V438"/><rect x="3" y="441" width="50" height="12"/><rect x="52" y="439" width="58" height="19"/></g>
  <g stroke="#fff"><path d="M68 355H127V322H190V289H258M28 460H112V445H250V470H130M64 478V542H118M64 522H250"/><rect x="163" y="295" width="10" height="22"/><rect x="148" y="351" width="22" height="11"/><rect x="193" y="501" width="50" height="18"/><rect x="157" y="496" width="22" height="16"/><rect x="112" y="502" width="22" height="13"/><rect x="268" y="445" width="10" height="46"/></g>
  <path d="M178 285V325M60 343H110M185 280H235M122 367H197M140 438L150 445L160 438M90 345L100 355L108 345M105 518H140M265 445H290M285 440V480M258 472H293M12 456H55" stroke="#0f0"/>
  <rect x="30" y="487" width="110" height="10" fill="url(#sp)"/><rect x="135" y="468" width="115" height="8" fill="url(#sp)"/>
  <path d="M30 484H130V452" stroke="#ff8000"/>
  <path d="M18 484H38M28 475V505M240 460H260M250 450V485" stroke="#ff0"/>
  <path d="M54 587H219" stroke="#fff" stroke-width="5"/>
  <text x="65" y="580" font-size="22" font-weight="700" fill="#0ff" stroke="none" textLength="153" lengthAdjust="spacingAndGlyphs" shape-rendering="auto">地基处理变形缝结构基层</text>
  <!-- center -->
  <rect x="391" y="165" width="28" height="125" fill="url(#sp)"/><rect x="481" y="165" width="28" height="125" fill="url(#sp)"/>
  <g stroke="#fff"><path d="M366 169H534M508 190H590M357 325V290H542V325M312 281H375V302M312 305H375"/><rect x="466" y="133" width="76" height="14"/><rect x="316" y="268" width="43" height="13"/><rect x="316" y="292" width="38" height="13"/><rect x="375" y="303" width="12" height="12"/><rect x="567" y="229" width="14" height="22"/><rect x="567" y="294" width="14" height="24"/><rect x="594" y="318" width="14" height="24"/><rect x="415" y="337" width="30" height="11"/>
   <rect x="358" y="358" width="184" height="190"/><rect x="490" y="403" width="34" height="14"/><path d="M405 445V418H525M495 418V445"/><rect x="570" y="390" width="12" height="24"/><rect x="570" y="468" width="12" height="24"/><rect x="570" y="519" width="12" height="24"/><rect x="316" y="516" width="38" height="12"/><rect x="316" y="538" width="70" height="14"/>
   <rect x="362" y="561" width="24" height="16"/><rect x="393" y="561" width="24" height="16"/><rect x="438" y="561" width="24" height="16"/><rect x="484" y="561" width="24" height="16"/><rect x="513" y="561" width="24" height="16"/></g>
  <rect x="346" y="321" width="208" height="12" fill="url(#sp)"/>
  <path d="M364 315H538" stroke="#f00"/>
  <path d="M448 200V148H543" stroke="#ff8000"/>
  <g stroke="#0f0"><rect x="598" y="163" width="46" height="14"/><path d="M585 182H647M584 185V330M562 290H597M562 323H597M562 332H597"/><rect x="594" y="294" width="48" height="12"/><path d="M587 358V548M552 358H597M552 445H597M552 514H597M552 547H597M352 580H548M360 560V590M390 560V590M418 570V590M482 560V590M508 560V590M540 570V590"/></g>
  <path d="M582 355h10v8h-10zM582 441h10v8h-10zM582 510h10v8h-10zM582 543h10v8h-10zM353 576h10v8h-10zM385 576h10v8h-10zM412 576h10v8h-10zM478 576h10v8h-10zM503 576h10v8h-10zM536 576h10v8h-10z" fill="#0f0"/>
  <g stroke="#f00" stroke-width="4"><rect x="391" y="445" width="28" height="70" fill="#000"/><rect x="481" y="445" width="28" height="70" fill="#000"/></g>
  <rect x="358" y="500" width="46" height="47" fill="url(#rh)"/>
  <path d="M316 552H386V515" stroke="#0ff"/>
  <path d="M564 601H630" stroke="#fff" stroke-width="3"/><rect x="606" y="585" width="24" height="12" stroke="#fff"/>
  <text x="568" y="597" font-size="30" fill="#0ff" stroke="none" shape-rendering="auto">J-1</text>
  <!-- right -->
  <g stroke="#fff"><path d="M726 34H792M748 34V88M772 34V88M720 128V88H798V128M678 80H738V110"/><rect x="682" y="67" width="42" height="13"/><rect x="678" y="97" width="56" height="13"/><rect x="790" y="140" width="30" height="16"/><rect x="690" y="165" width="24" height="11"/><rect x="748" y="165" width="24" height="11"/><rect x="816" y="165" width="24" height="11"/><rect x="832" y="96" width="14" height="24"/><rect x="832" y="140" width="14" height="20"/>
   <rect x="720" y="232" width="78" height="83"/><rect x="748" y="257" width="26" height="34"/><rect x="770" y="208" width="34" height="14"/><rect x="802" y="232" width="14" height="26"/><rect x="802" y="262" width="14" height="22"/><rect x="802" y="292" width="14" height="22"/><rect x="822" y="262" width="14" height="22"/><rect x="678" y="282" width="43" height="14"/><rect x="678" y="304" width="43" height="14"/><rect x="724" y="322" width="24" height="10"/><rect x="748" y="322" width="24" height="10"/><rect x="772" y="322" width="24" height="10"/><rect x="748" y="343" width="22" height="10"/><rect x="775" y="402" width="22" height="10"/></g>
  <rect x="709" y="127" width="100" height="12" fill="url(#sp)"/><path d="M727 118H790" stroke="#f00"/>
  <g stroke="#0f0"><rect x="862" y="97" width="50" height="14"/><path d="M845 114H915M850 86V145M826 88H860M818 128H870M706 182H812M714 160V190M800 160V190M817 225V320M838 225V320M718 338H803M718 358H803"/></g>
  <rect x="706" y="178" width="22" height="8" fill="#0f0"/><rect x="790" y="178" width="22" height="8" fill="#0f0"/><rect x="846" y="84" width="10" height="60" fill="#0f0" opacity=".7"/>
  <rect x="913" y="124" width="37" height="19" stroke="#0ff"/>
  <rect x="722" y="280" width="38" height="36" fill="url(#rh)"/>
  <path d="M678 318H750" stroke="#0ff"/>
  <path d="M732 417H795" stroke="#fff" stroke-width="5"/>
  <text x="733" y="414" font-size="32" fill="#0ff" stroke="none" shape-rendering="auto">ZJ</text>
  <text x="1228" y="74" font-size="30" fill="#0ff" stroke="none" shape-rendering="auto" textLength="48" lengthAdjust="spacingAndGlyphs">GZ3</text>
  <path d="M1221 81H1287M1221 86H1287" stroke="#0ff"/>
  <!-- notes -->
  <g stroke="#0ff"><rect x="916" y="165" width="14" height="20"/><rect x="916" y="247" width="16" height="19"/><rect x="916" y="313" width="16" height="16"/><rect x="919" y="345" width="14" height="16"/><rect x="919" y="379" width="14" height="18"/></g>
  <g fill="#0ff" stroke="none" font-size="22" font-weight="700" shape-rendering="auto">
   <text x="935" y="184" textLength="405" lengthAdjust="spacingAndGlyphs">根据甲方提供地质工程勘察报告，本基础持力层选用强风化中风化</text>
   <text x="938" y="211" textLength="437" lengthAdjust="spacingAndGlyphs">强度层及地基承载力，强风化层承载力特征值 fak=800kpa;</text>
   <text x="940" y="236" textLength="165" lengthAdjust="spacingAndGlyphs">中fak=1600kpa.</text>
   <text x="935" y="265" textLength="385" lengthAdjust="spacingAndGlyphs">基础施工开挖后，须经设计人员及地质专业人员验槽后方可施工，</text>
   <text x="938" y="296" textLength="235" lengthAdjust="spacingAndGlyphs">图中不明之处请与设计人员及时联系。</text>
   <text x="937" y="329" textLength="295" lengthAdjust="spacingAndGlyphs">本地基梁墙厚除注明外240；未注明构造柱GZ1；</text>
   <text x="937" y="361" textLength="232" lengthAdjust="spacingAndGlyphs">本图未标注基础、梁、板钢筋等另详。</text>
   <text x="937" y="398" textLength="398" lengthAdjust="spacingAndGlyphs">本图所注标高未注明者按结构标高，基础施工时须配合其他专业施工图预留孔洞。</text>
  </g>
 </g>
</g>
</svg>
</body></html>
